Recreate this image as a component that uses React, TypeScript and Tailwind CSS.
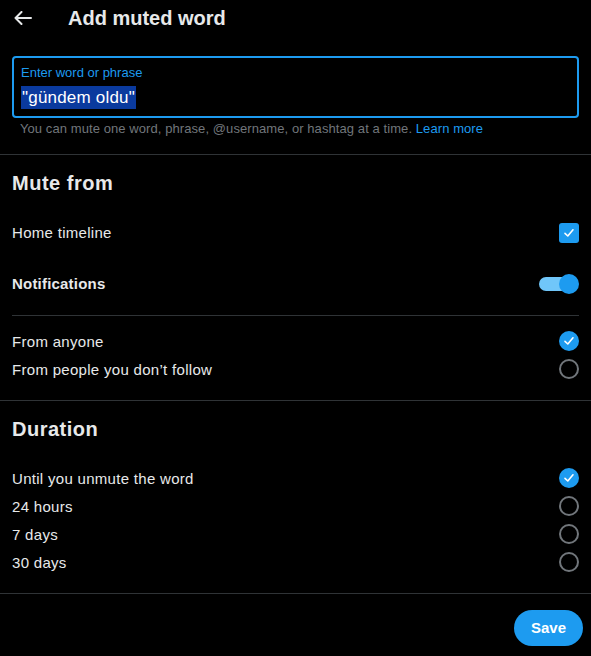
import React from "react";

const CheckMark = () => (
  <svg width="12" height="12" viewBox="0 0 12 12" fill="none">
    <path d="M2 6.4 L4.8 9 L10 2.8" stroke="#fff" strokeWidth="1.6" strokeLinecap="round" strokeLinejoin="round" />
  </svg>
);

const Checkbox = () => (
  <div className="w-[20px] h-[20px] rounded-[3px] bg-[#1d9bf0] flex items-center justify-center">
    <CheckMark />
  </div>
);

const Radio = ({ on }: { on: boolean }) =>
  on ? (
    <div className="w-[20px] h-[20px] rounded-full bg-[#1d9bf0] flex items-center justify-center">
      <CheckMark />
    </div>
  ) : (
    <div className="w-[20px] h-[20px] rounded-full border-2 border-[#71767b]" />
  );

const Toggle = () => (
  <div className="relative w-[40px] h-[20px] flex items-center">
    <div className="w-[34px] h-[14px] rounded-full bg-[#70c6f9]" />
    <div className="absolute right-0 top-0 w-[20px] h-[20px] rounded-full bg-[#1d9bf0]" />
  </div>
);

const OptionRow = ({ label, on }: { label: string; on: boolean }) => (
  <div className="h-[28px] flex items-center justify-between">
    <span className="pt-[2px] text-[15px] tracking-[0.3px] text-[#e7e9ea]">{label}</span>
    <Radio on={on} />
  </div>
);

export default function App() {
  return (
    <div
      className="w-[591px] h-[656px] bg-black text-[#e7e9ea] overflow-hidden"
      style={{ fontFamily: '"Liberation Sans", Arial, sans-serif' }}
    >
      {/* Top: header + input */}
      <div className="h-[155px] border-b border-[#2f3336]">
        <div className="h-[36px] flex items-center">
          <div className="w-[68px] pl-[14px] flex items-center">
            <svg width="18" height="14" viewBox="0 0 18 14" fill="none">
              <path d="M1.5 7 H17 M7.5 1 L1.5 7 L7.5 13" stroke="#e7e9ea" strokeWidth="2" strokeLinecap="round" strokeLinejoin="round" />
            </svg>
          </div>
          <h1 className="text-[20px] font-bold text-[#e7e9ea]">Add muted word</h1>
        </div>
        <div className="mx-[12px] mt-[20px] h-[62px] border-2 border-[#1d9bf0] rounded-[4px] pl-[7px] pt-[7px]">
          <div className="text-[13px] leading-[16px] text-[#1d9bf0]">Enter word or phrase</div>
          <div className="mt-[5px] h-[23px] flex">
            <span className="bg-[#0a3a9e] text-white text-[17px] tracking-[0.2px] leading-[23px] px-[1px]">"gündem oldu"</span>
          </div>
        </div>
        <div className="mt-[3px] pl-[20px] text-[13px] tracking-[0.08px] leading-[16px] text-[#71767b]">
          You can mute one word, phrase, @username, or hashtag at a time.{" "}
          <span className="text-[#1d9bf0]">Learn more</span>
        </div>
      </div>

      {/* Mute from */}
      <div className="h-[246px] border-b border-[#2f3336] px-[12px]">
        <div className="h-[56px] flex items-center">
          <h2 className="text-[20px] font-bold tracking-[0.5px]">Mute from</h2>
        </div>
        <div className="h-[44px] flex items-center justify-between">
          <span className="pt-[1px] text-[15px] tracking-[0.3px]">Home timeline</span>
          <Checkbox />
        </div>
        <div className="h-[58px] flex items-center justify-between">
          <span className="pt-[1px] text-[15px] font-bold tracking-[0.2px]">Notifications</span>
          <Toggle />
        </div>
        <div className="mt-[2px] h-px bg-[#2f3336]" />
        <div className="mt-[11px]">
          <OptionRow label="From anyone" on={true} />
          <OptionRow label="From people you don’t follow" on={false} />
        </div>
      </div>

      {/* Duration */}
      <div className="h-[193px] border-b border-[#2f3336] px-[12px]">
        <div className="h-[56px] flex items-center">
          <h2 className="text-[20px] font-bold tracking-[0.5px]">Duration</h2>
        </div>
        <div className="mt-[7px]">
          <OptionRow label="Until you unmute the word" on={true} />
          <OptionRow label="24 hours" on={false} />
          <OptionRow label="7 days" on={false} />
          <OptionRow label="30 days" on={false} />
        </div>
      </div>

      <div className="flex justify-end pr-[8px] pt-[16px]">
        <button className="h-[36px] w-[69px] rounded-full bg-[#1d9bf0] text-white text-[15px] font-bold">
          Save
        </button>
      </div>
    </div>
  );
}
